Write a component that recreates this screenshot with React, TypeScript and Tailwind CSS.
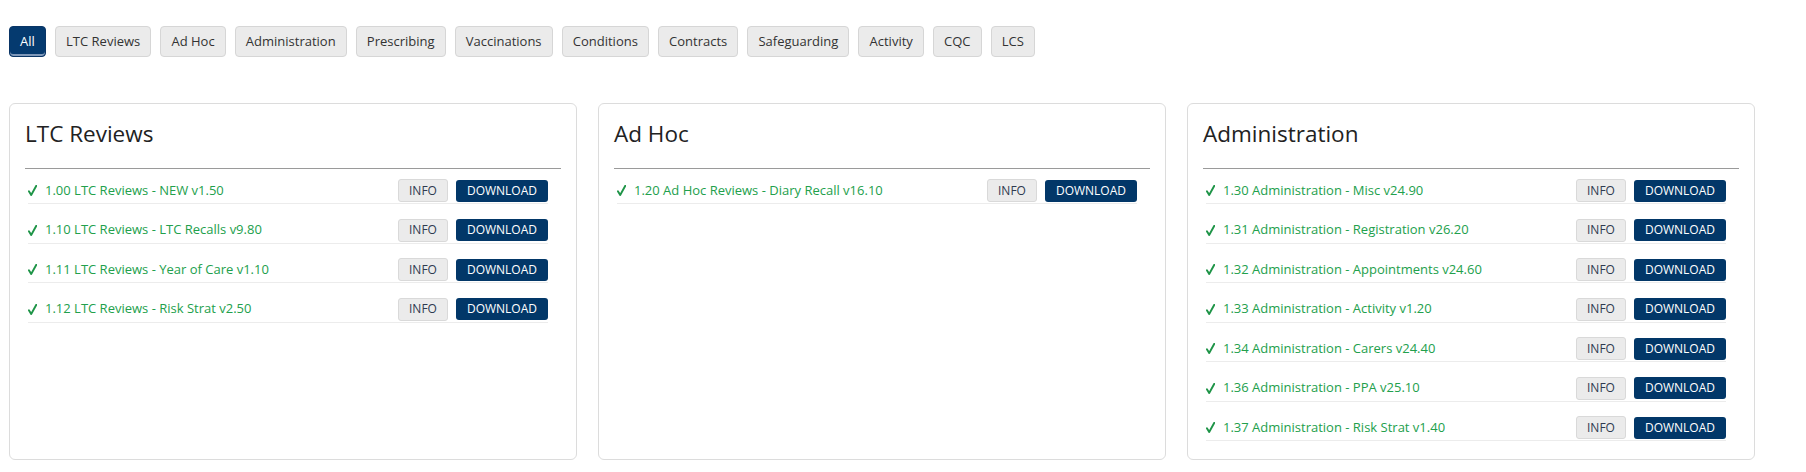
const tabs = [
  'All',
  'LTC Reviews',
  'Ad Hoc',
  'Administration',
  'Prescribing',
  'Vaccinations',
  'Conditions',
  'Contracts',
  'Safeguarding',
  'Activity',
  'CQC',
  'LCS',
];

const sections: { title: string; items: string[] }[] = [
  {
    title: 'LTC Reviews',
    items: [
      '1.00 LTC Reviews - NEW v1.50',
      '1.10 LTC Reviews - LTC Recalls v9.80',
      '1.11 LTC Reviews - Year of Care v1.10',
      '1.12 LTC Reviews - Risk Strat v2.50',
    ],
  },
  {
    title: 'Ad Hoc',
    items: ['1.20 Ad Hoc Reviews - Diary Recall v16.10'],
  },
  {
    title: 'Administration',
    items: [
      '1.30 Administration - Misc v24.90',
      '1.31 Administration - Registration v26.20',
      '1.32 Administration - Appointments v24.60',
      '1.33 Administration - Activity v1.20',
      '1.34 Administration - Carers v24.40',
      '1.36 Administration - PPA v25.10',
      '1.37 Administration - Risk Strat v1.40',
    ],
  },
];

function Tick() {
  return (
    <svg width="9" height="11" viewBox="0 0 9 11" className="mr-[8px] shrink-0">
      <path d="M0.9 6.2 L3.2 10 L8.3 0.8" fill="none" stroke="#1e9447" strokeWidth="1.9" strokeLinecap="round" strokeLinejoin="round" />
    </svg>
  );
}

function ReportRow({ label }: { label: string }) {
  return (
    <div className="flex items-center justify-between border-b border-[#ececec] pb-px mb-[14.5px]">
      <div className="flex items-center text-[13px] text-[#22a04c]">
        <Tick />
        <span>{label}</span>
      </div>
      <div className="flex items-center gap-[8px]">
        <button className="h-[23px] px-[10px] border border-[#d9d9d9] bg-[#ebebeb] rounded-[3px] text-[12px] text-[#2f3a50] leading-none">
          INFO
        </button>
        <button className="h-[22px] px-[11px] bg-[#023768] rounded-[3px] text-[12px] text-white leading-none">
          DOWNLOAD
        </button>
      </div>
    </div>
  );
}

export default function App() {
  return (
    <div className="min-h-[472px] bg-white font-['Open_Sans',sans-serif] pl-[9px] pr-[51px] pt-[26px]">
      <div className="flex items-center gap-[9px]">
        {tabs.map((t) =>
          t === 'All' ? (
            <button
              key={t}
              className="h-[31px] px-[10.1px] rounded-[4px] border border-[#0a3566] bg-[#053a6f] text-[13px] text-white shadow-[inset_0_-2px_0_#7f98b9]"
            >
              {t}
            </button>
          ) : (
            <button
              key={t}
              className="h-[31px] px-[10.1px] rounded-[4px] border border-[#d6d6d6] bg-[#ebebeb] text-[13px] text-[#333]"
            >
              {t}
            </button>
          )
        )}
      </div>

      <div className="grid grid-cols-3 gap-[21px] mt-[46px]">
        {sections.map((s) => (
          <div key={s.title} className="border border-[#dcdcdc] rounded-[6px] bg-white px-[15px] pt-[15px] pb-[3.5px]">
            <h3 className="text-[22.5px] leading-[30px] text-[#222]">{s.title}</h3>
            <hr className="mt-[19px] border-0 border-t border-[#9a9a9a]" />
            <div className="mt-[10px] ml-[3px] mr-[13px]">
              {s.items.map((it) => (
                <ReportRow key={it} label={it} />
              ))}
            </div>
          </div>
        ))}
      </div>
    </div>
  );
}
